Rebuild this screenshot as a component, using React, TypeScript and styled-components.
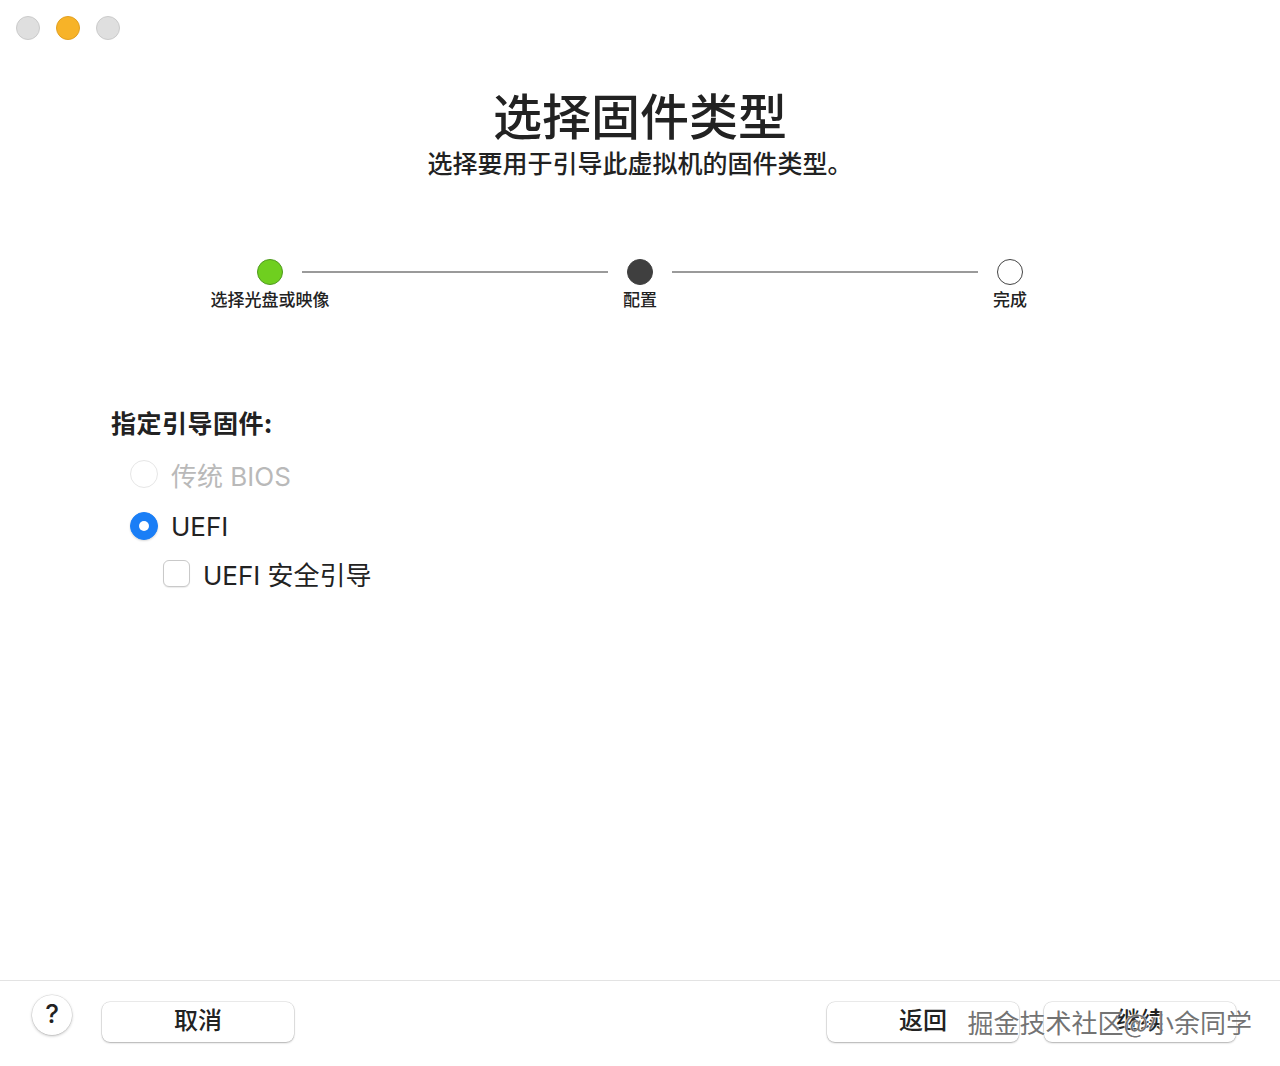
import styled, { createGlobalStyle } from "styled-components";

const GlobalStyle = createGlobalStyle`
  html, body {
    margin: 0;
    padding: 0;
    background: #ffffff;
  }
  body {
    font-family: Inter, "Noto Sans CJK SC", sans-serif;
    color: #222222;
  }
`;

const steps = [
  { label: "选择光盘或映像", state: "done" },
  { label: "配置", state: "current" },
  { label: "完成", state: "todo" },
] as const;

type StepState = "done" | "current" | "todo";

const App = () => {
  return (
    <Window>
      <GlobalStyle />
      <TitleBar>
        <Light />
        <Light $active />
        <Light />
      </TitleBar>

      <Header>
        <Title>选择固件类型</Title>
        <Subtitle>选择要用于引导此虚拟机的固件类型。</Subtitle>
      </Header>

      <Stepper>
        {steps.map((step, i) => (
          <StepGroup key={step.label}>
            {i > 0 && <StepLine />}
            <Step>
              <StepDot $state={step.state} />
              <StepLabel>{step.label}</StepLabel>
            </Step>
          </StepGroup>
        ))}
      </Stepper>

      <Content>
        <SectionLabel>指定引导固件:</SectionLabel>
        <Option $disabled>
          <Radio $disabled />
          <span>传统 BIOS</span>
        </Option>
        <Option>
          <Radio $checked />
          <span>UEFI</span>
        </Option>
        <Option $indent $tight>
          <Checkbox />
          <span>UEFI 安全引导</span>
        </Option>
      </Content>

      <Footer>
        <HelpButton>?</HelpButton>
        <Button>取消</Button>
        <Spacer />
        <Button>返回</Button>
        <Button>继续</Button>
        <Watermark>掘金技术社区@小余同学</Watermark>
      </Footer>
    </Window>
  );
};

export default App;

const Window = styled.div`
  position: relative;
  height: 1066px;
  display: flex;
  flex-direction: column;
  overflow: hidden;
  background: #ffffff;
`;

const TitleBar = styled.div`
  display: flex;
  gap: 16px;
  padding: 16px;
  height: 24px;
`;

const Light = styled.span<{ $active?: boolean }>`
  width: 24px;
  height: 24px;
  border-radius: 50%;
  box-sizing: border-box;
  background: ${(p) => (p.$active ? "#f7b328" : "#dfdfdf")};
  border: 1px solid ${(p) => (p.$active ? "#e2a021" : "#cbcbcb")};
`;

const Header = styled.div`
  display: flex;
  flex-direction: column;
  align-items: center;
  margin-top: 28px;
`;

const Title = styled.h1`
  margin: 0;
  font-family: "Noto Sans CJK SC", sans-serif;
  font-size: 49px;
  font-weight: 500;
  line-height: 59px;
  color: #222222;
`;

const Subtitle = styled.p`
  margin: 4px 0 0;
  font-family: "Noto Sans CJK SC", sans-serif;
  font-size: 25px;
  font-weight: 500;
  line-height: 30px;
  color: #222222;
`;

const Stepper = styled.div`
  display: flex;
  width: 766px;
  margin: 82px auto 0;
`;

const StepGroup = styled.div`
  display: flex;
  flex: 1;
  &:first-child {
    flex: 0 0 auto;
  }
`;

const StepLine = styled.div`
  flex: 1;
  height: 2px;
  margin: 12px 19px 0;
  background: #9a9a9a;
`;

const Step = styled.div`
  width: 26px;
  display: flex;
  flex-direction: column;
  align-items: center;
  gap: 3px;
`;

const StepDot = styled.span<{ $state: StepState }>`
  width: 26px;
  height: 26px;
  border-radius: 50%;
  box-sizing: border-box;
  background: ${(p) =>
    p.$state === "done" ? "#6fcf1f" : p.$state === "current" ? "#3f3f3f" : "#ffffff"};
  border: 1px solid
    ${(p) => (p.$state === "done" ? "#4f9a1e" : p.$state === "current" ? "#3f3f3f" : "#444444")};
`;

const StepLabel = styled.span`
  white-space: nowrap;
  font-family: "Noto Sans CJK SC", sans-serif;
  font-size: 17px;
  font-weight: 500;
  line-height: 22px;
  color: #222222;
`;

const Content = styled.div`
  display: flex;
  flex-direction: column;
  align-items: flex-start;
  padding-left: 111px;
  margin-top: 96px;
`;

const SectionLabel = styled.div`
  font-family: "Noto Sans CJK SC", sans-serif;
  font-size: 25px;
  font-weight: 700;
  line-height: 32px;
  letter-spacing: 0.5px;
  color: #222222;
  margin-bottom: 19px;
`;

const Option = styled.label<{ $disabled?: boolean; $indent?: boolean; $tight?: boolean }>`
  display: flex;
  align-items: center;
  gap: 13px;
  height: 34px;
  margin: ${(p) => (p.$tight ? "-5px" : "0")} 0 18px ${(p) => (p.$indent ? "52px" : "19px")};
  font-family: Inter, "Noto Sans CJK SC", sans-serif;
  font-size: 26px;
  color: ${(p) => (p.$disabled ? "#b9b9b9" : "#222222")};
`;

const Radio = styled.span<{ $checked?: boolean; $disabled?: boolean }>`
  width: 28px;
  height: 28px;
  border-radius: 50%;
  box-sizing: border-box;
  display: flex;
  align-items: center;
  justify-content: center;
  background: ${(p) => (p.$checked ? "#1a7ef6" : "#ffffff")};
  border: 1px solid ${(p) => (p.$checked ? "#1a7ef6" : p.$disabled ? "#e6e6e6" : "#c8c8c8")};
  box-shadow: ${(p) => (p.$checked ? "0 1px 2px rgba(0,0,0,0.15)" : "none")};
  &::after {
    content: "";
    display: ${(p) => (p.$checked ? "block" : "none")};
    width: 10px;
    height: 10px;
    border-radius: 50%;
    background: #ffffff;
  }
`;

const Checkbox = styled.span`
  width: 27px;
  height: 27px;
  border-radius: 6px;
  box-sizing: border-box;
  background: #ffffff;
  border: 1px solid #c9c9c9;
  box-shadow: 0 1px 1px rgba(0, 0, 0, 0.08);
`;

const Footer = styled.div`
  position: relative;
  margin-top: auto;
  height: 86px;
  box-sizing: border-box;
  border-top: 1px solid #e3e3e3;
  display: flex;
  align-items: flex-start;
  gap: 25px;
  padding: 21px 44px 0 32px;
`;

const HelpButton = styled.button`
  width: 40px;
  height: 40px;
  margin: -7px 5px 0 0;
  border-radius: 50%;
  border: none;
  background: #ffffff;
  box-shadow: 0 0 0 0.5px rgba(0, 0, 0, 0.12), 0 1px 3px rgba(0, 0, 0, 0.25);
  font-family: Inter, sans-serif;
  font-size: 26px;
  font-weight: 500;
  color: #222222;
  padding: 0 0 3px;
  display: flex;
  align-items: center;
  justify-content: center;
`;

const Button = styled.button`
  width: 192px;
  height: 40px;
  border: none;
  border-radius: 8px;
  background: #ffffff;
  box-shadow: 0 0 0 0.5px rgba(0, 0, 0, 0.15), 0 1px 2px rgba(0, 0, 0, 0.25);
  font-family: "Noto Sans CJK SC", sans-serif;
  font-size: 24px;
  font-weight: 500;
  line-height: 34px;
  color: #222222;
  padding: 0 0 6px;
`;

const Spacer = styled.div`
  flex: 1;
`;

const Watermark = styled.span`
  position: absolute;
  right: 28px;
  top: 25px;
  font-family: "Noto Sans CJK SC", sans-serif;
  font-size: 26px;
  line-height: 32px;
  color: rgba(90, 90, 90, 0.85);
  text-shadow: 0 0 2px #ffffff, 0 0 1px #ffffff;
  pointer-events: none;
`;
